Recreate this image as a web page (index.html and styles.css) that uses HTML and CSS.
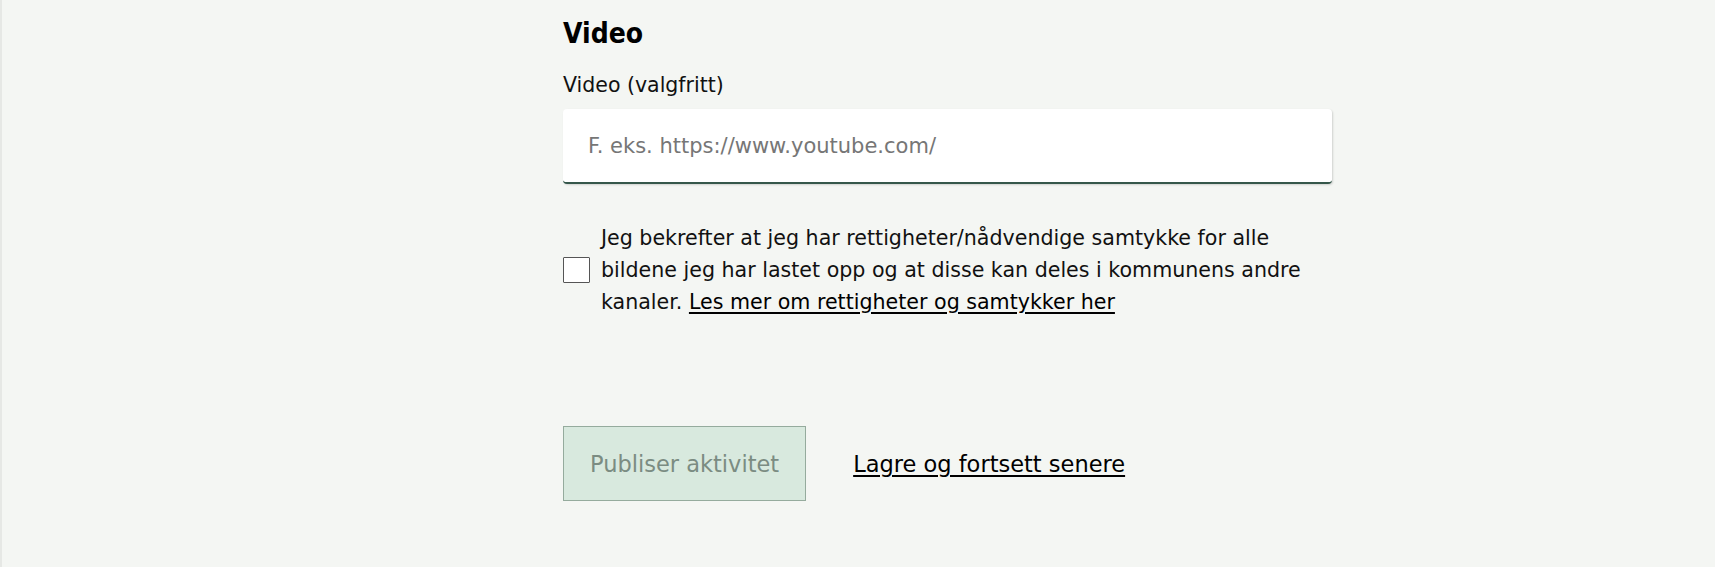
FILE: index.html
```html
<!DOCTYPE html>
<html lang="no">
<head>
<meta charset="utf-8">
<title>Video</title>
<link rel="stylesheet" href="styles.css">
</head>
<body>
<div class="page">
  <form class="form">
    <h2 class="heading">Video</h2>
    <label class="label" for="video">Video (valgfritt)</label>
    <input class="input" id="video" type="text" placeholder="F. eks. https://www.youtube.com/">
    <div class="consent">
      <input class="check" type="checkbox" id="consent">
      <label class="consent-text" for="consent">Jeg bekrefter at jeg har rettigheter/nådvendige samtykke for alle bildene jeg har lastet opp og at disse kan deles i kommunens andre kanaler. <a href="#" class="link">Les mer om rettigheter og samtykker her</a></label>
    </div>
    <div class="actions">
      <button class="btn" type="button" disabled>Publiser aktivitet</button>
      <a href="#" class="save">Lagre og fortsett senere</a>
    </div>
  </form>
</div>
</body>
</html>
```
FILE: styles.css
```css
html, body {
  margin: 0;
  padding: 0;
  height: 100%;
}
body {
  background: #f4f6f3;
  font-family: "DejaVu Sans", sans-serif;
  color: #111;
}
.page {
  min-height: 100%;
  border-left: 2px solid #e6e8e5;
  padding-left: 561px;
  box-sizing: border-box;
}
.form {
  width: 769px;
  display: flex;
  flex-direction: column;
  padding-top: 15px;
}
.heading {
  margin: 0;
  font-family: "DejaVu Sans Condensed", "DejaVu Sans", sans-serif;
  font-size: 28px;
  line-height: 37px;
  font-weight: bold;
  color: #000;
}
.label {
  margin-top: 19px;
  font-size: 20.5px;
  line-height: 28px;
}
.input {
  margin-top: 10px;
  height: 75px;
  box-sizing: border-box;
  border: none;
  border-bottom: 2px solid #35574a;
  border-radius: 4px;
  background: #fff;
  padding: 0 25px;
  font-family: inherit;
  font-size: 21px;
  color: #111;
  box-shadow: 1px 1px 2px rgba(0,0,0,0.15);
  outline: none;
}
.input::placeholder {
  color: #767676;
}
.consent {
  margin-top: 38px;
  display: flex;
  align-items: center;
  gap: 11px;
}
.check {
  appearance: none;
  -webkit-appearance: none;
  margin: 0;
  flex: none;
  width: 27px;
  height: 26px;
  box-sizing: border-box;
  border: 1.5px solid #555;
  background: #fff;
  border-radius: 1px;
}
.consent-text {
  font-size: 20.6px;
  line-height: 32px;
  color: #111;
}
.link {
  color: #000;
  text-decoration: underline;
  text-decoration-thickness: 2px;
  text-underline-offset: 3px;
}
.actions {
  margin-top: 108px;
  display: flex;
  align-items: center;
  gap: 47px;
}
.btn {
  height: 75px;
  padding: 0 26px;
  background: #d8e9de;
  border: 1px solid #95ab9d;
  font-family: inherit;
  font-size: 22.5px;
  color: #7b8c82;
}
.save {
  font-size: 22.5px;
  color: #000;
  text-decoration: underline;
  text-decoration-thickness: 2px;
  text-underline-offset: 3px;
}
```
